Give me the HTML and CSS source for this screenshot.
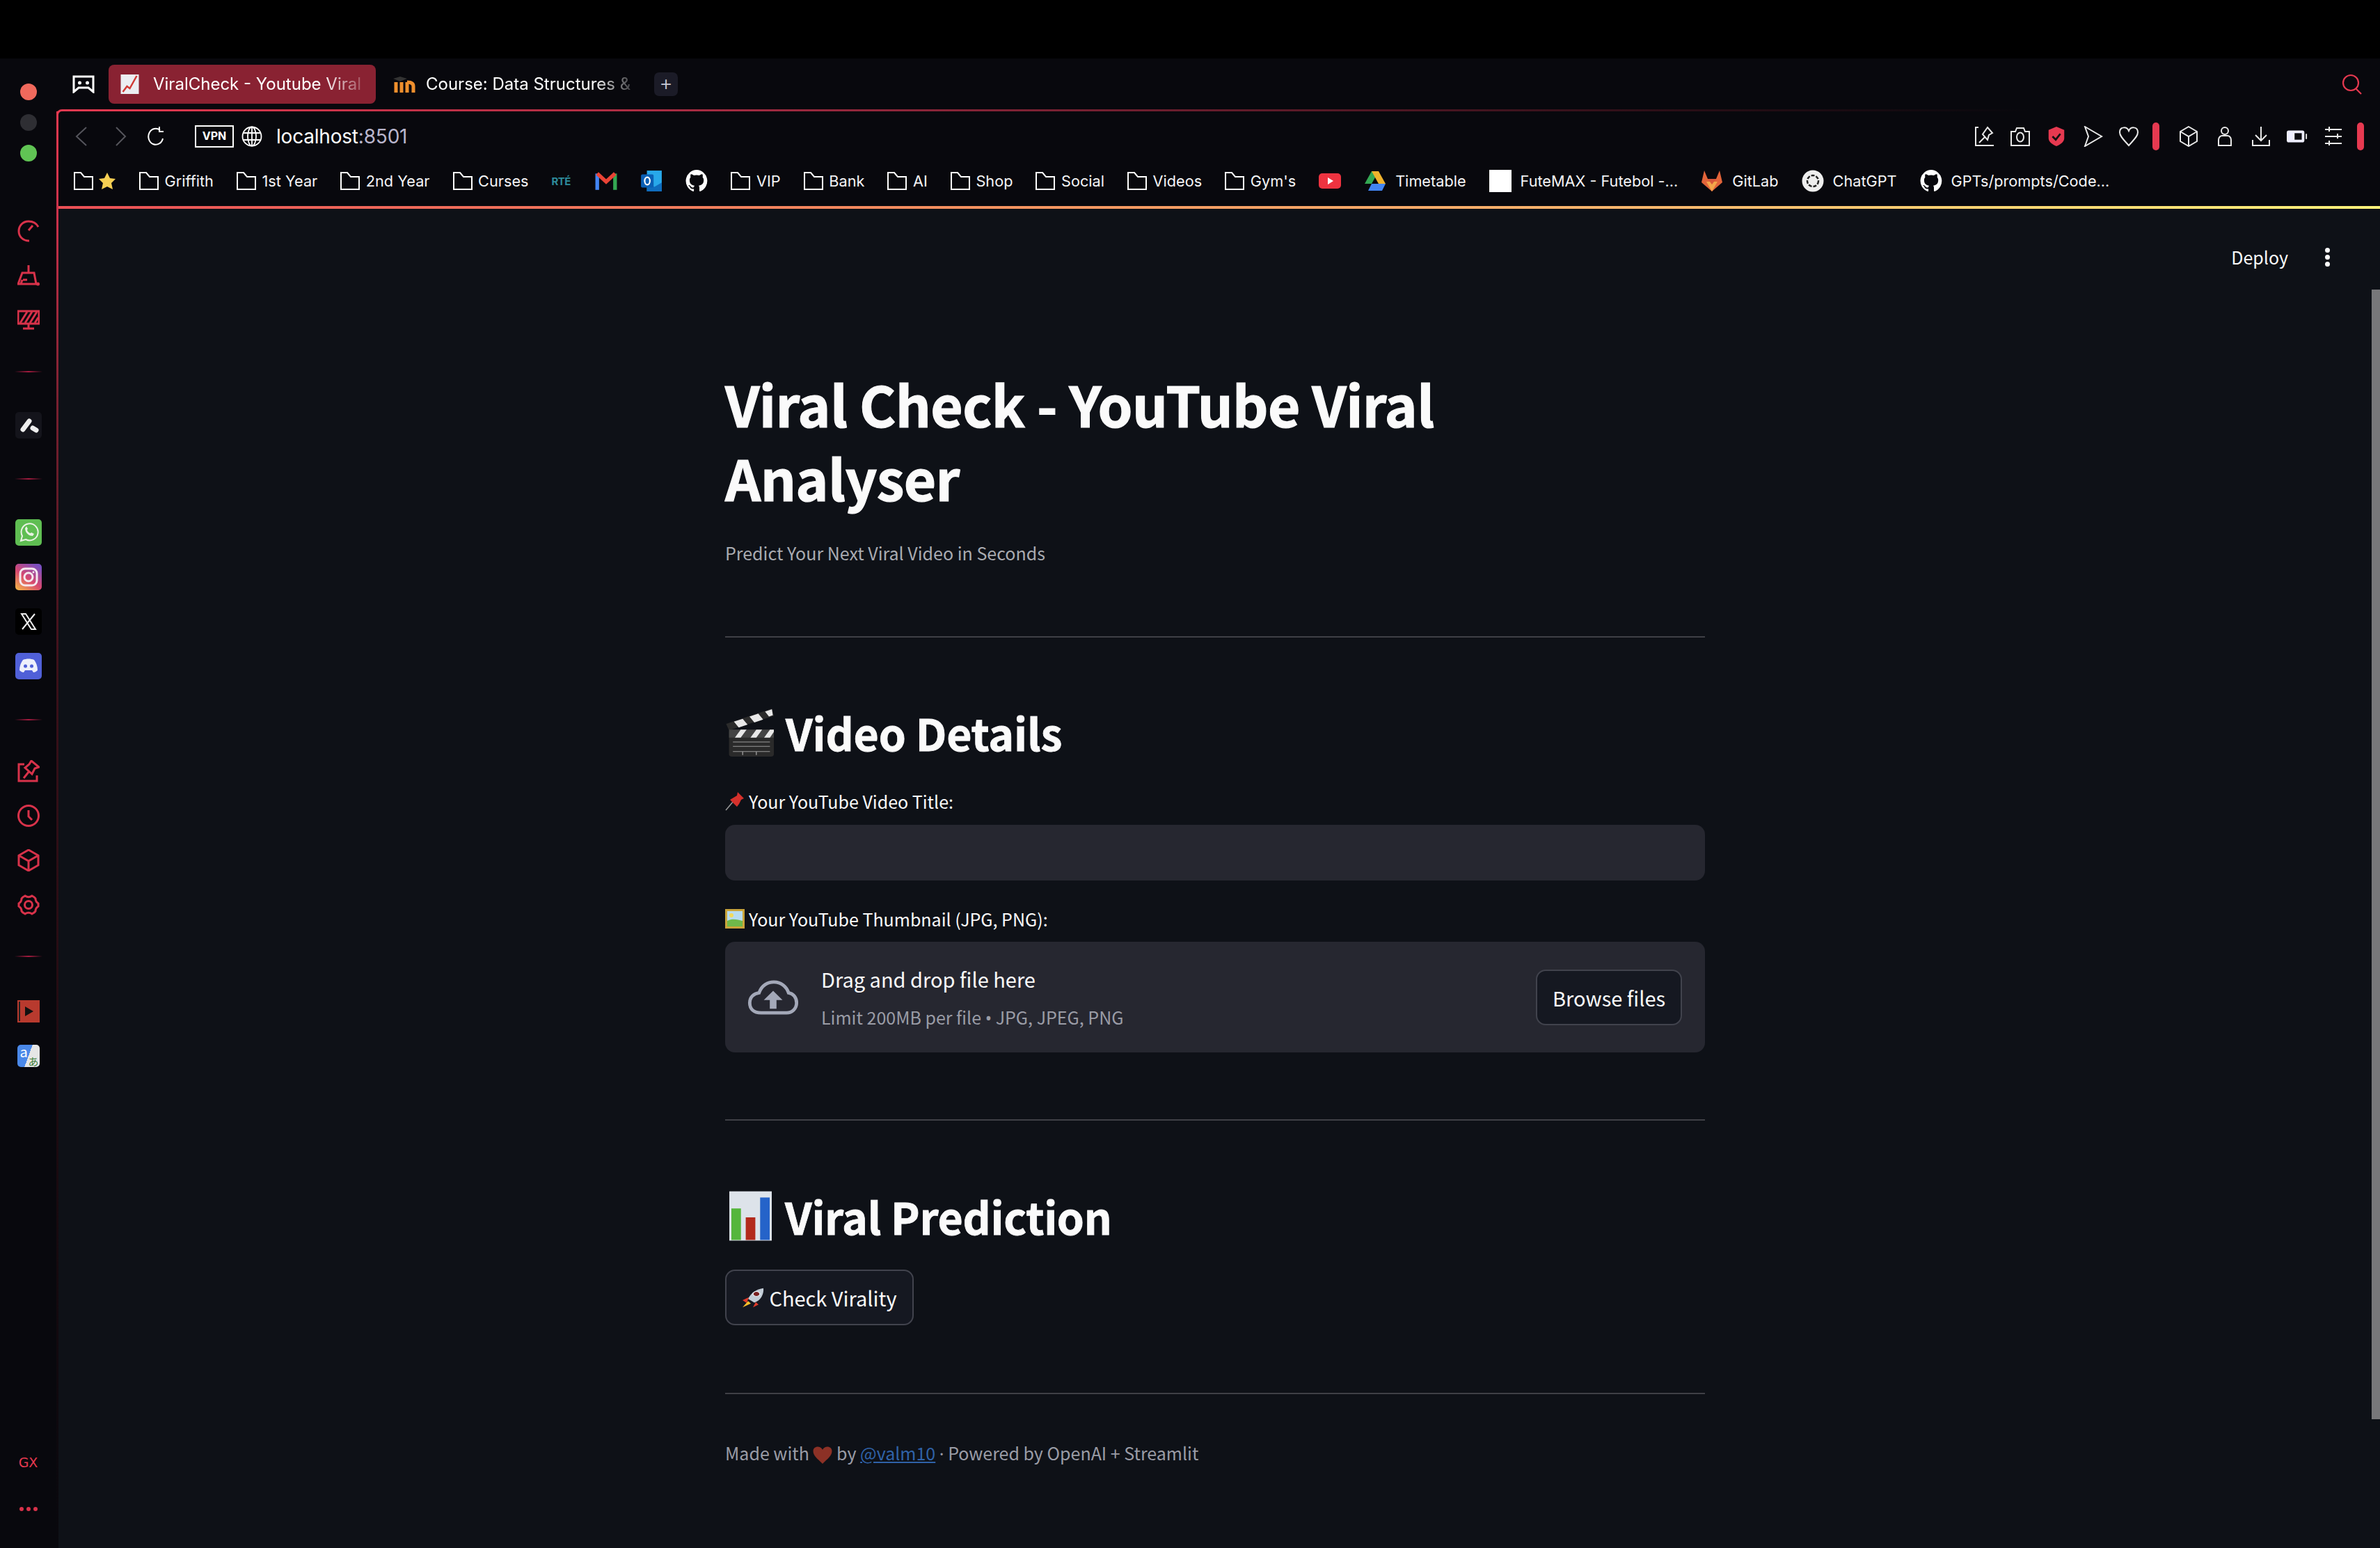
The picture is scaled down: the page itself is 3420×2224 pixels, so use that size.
FILE: index.html
```html
<!DOCTYPE html>
<html lang="en">
<head>
    <meta charset="UTF-8">
    <title>ViralCheck - Youtube Viral Analyser</title>
    <link rel="stylesheet" href="styles.css">
</head>
<body>
    <div class="top-strip"></div>
    <div class="browser">
        <aside class="sidebar">
            <div class="traffic">
                <span class="dot dot-red"></span>
                <span class="dot dot-grey"></span>
                <span class="dot dot-green"></span>
            </div>
            <div class="side-group side-group-first">
                <svg class="side-icon" viewBox="0 0 32 32"><path d="M30 10C27 4 22 2 16 2 8 2 2 8 2 16s6 14 15 14" /><path d="M16 15l6-7" /></svg>
                <svg class="side-icon" viewBox="0 0 32 32"><path d="M16 1v11M7 12h17l3 16H1zM8 22h6M7 22l-2 6" /><circle cx="29.500" cy="28" r="2.500" fill="#d8324a" stroke="none" /></svg>
                <svg class="side-icon" viewBox="0 0 32 32"><rect x="1" y="3" width="30" height="18" /><path d="M4 20L14 4M11 20L21 4M18 20L28 4M25 20l5-8M8 28h16M16 22v5" /></svg>
            </div>
            <div class="side-line"></div>
            <div class="side-app app-dark"><svg viewBox="0 0 38 38"><path d="M11 25l9-12" stroke="#eee" stroke-width="7" stroke-linecap="round" /><path d="M25 23l5 3" stroke="#eee" stroke-width="7" stroke-linecap="round" /></svg></div>
            <div class="side-line"></div>
            <div class="side-group tight">
                <div class="side-app app-green"><svg viewBox="0 0 38 38"><path d="M8 31l2-7a12 12 0 1 1 5 5z" fill="none" stroke="#e9f2e4" stroke-width="2" /><path d="M14 13c0 6 5 11 11 11l2-3-4-2-1 1c-2 0-5-3-5-5l1-1-2-4z" fill="#e9f2e4" /></svg></div>
                <div class="side-app app-insta"><svg viewBox="0 0 38 38"><rect x="7" y="7" width="24" height="24" rx="7" fill="none" stroke="#f4e8ee" stroke-width="3" /><circle cx="19" cy="19" r="6" fill="none" stroke="#f4e8ee" stroke-width="3" /><circle cx="26" cy="12" r="1.500" fill="#f4e8ee" /></svg></div>
                <div class="side-app app-black"><svg viewBox="0 0 38 38"><path d="M9 8h6l14 22h-6zM28 8L10 30" fill="none" stroke="#eee" stroke-width="2" /></svg></div>
                <div class="side-app app-discord"><svg viewBox="0 0 38 38"><path d="M11 10c5-2 11-2 16 0 3 4 5 9 5 15-2 2-4 3-6 3l-2-3H14l-2 3c-2 0-4-1-6-3 0-6 2-11 5-15z" fill="#eef0fb" /><circle cx="14.500" cy="19" r="2.500" fill="#5060d8" /><circle cx="23.500" cy="19" r="2.500" fill="#5060d8" /></svg></div>
            </div>
            <div class="side-line"></div>
            <div class="side-group">
                <svg class="side-icon" viewBox="0 0 32 32"><path d="M10 6H2v24h26v-8" /><path d="M20 1l11 9-6 2-4 8-10-9 6-5zM9 26l8-10" /></svg>
                <svg class="side-icon" viewBox="0 0 32 32"><circle cx="16" cy="16" r="14.500" /><path d="M16 8v9l5 5" /></svg>
                <svg class="side-icon" viewBox="0 0 32 32"><path d="M16 1l14 8v14l-14 8-14-8V9zM2 9l14 8 14-8M16 17v14" /></svg>
                <svg class="side-icon" viewBox="0 0 32 32"><circle cx="16" cy="16" r="5.500" /><path d="M11 3c3 2 7 2 10 0 2 1 4 2 5 4 0 3 1 5 4 7v4c-3 2-4 4-4 7-1 2-3 3-5 4-3-2-7-2-10 0-2-1-4-2-5-4 0-3-1-5-4-7v-4c3-2 4-4 4-7 1-2 3-3 5-4z" /></svg>
            </div>
            <div class="side-line"></div>
            <div class="side-group side-group-last">
                <div class="side-app app-player"><svg viewBox="0 0 32 32"><rect width="32" height="32" fill="#b83a2e" /><rect x="2" y="2" width="2" height="28" fill="#222" /><path d="M11 9l12 7-12 7z" fill="#111" /></svg></div>
                <div class="side-app app-translate">
                    <span class="tr-a">a</span><span class="tr-b">あ</span>
                </div>
            </div>
            <div class="side-bottom">
                <span class="gx">GX</span>
                <span class="more-dots"><i></i><i></i><i></i></span>
            </div>
        </aside>

        <div class="window">
            <div class="tabs">
                <svg class="tabs-icon" viewBox="0 0 32 26"><path d="M2 2h28v22l-7-6H9l-7 6z" /><circle cx="10.500" cy="11" r="2.500" fill="#fff" stroke="none" /><circle cx="21.500" cy="11" r="2.500" fill="#fff" stroke="none" /></svg>
                <div class="tab tab-active">
                    <svg class="tab-fav" viewBox="0 0 26 28"><rect width="26" height="28" fill="#eceef2" /><path d="M3 25l6-8 4 3 10-18" fill="none" stroke="#d03a35" stroke-width="2.500" /></svg>
                    <span class="tab-title">ViralCheck - Youtube Viral</span>
                </div>
                <div class="tab tab-second">
                    <svg class="tab-fav-wide" viewBox="0 0 34 24"><path d="M1 4l10-3 10 3-10 4z" fill="#333" /><path d="M5 9v15M13 9v15M21 9c6 0 9 2 9 6v9M21 9v15" fill="none" stroke="#ef8f2d" stroke-width="5" /></svg>
                    <span class="tab-title tab-title-second">Course: Data Structures &amp;</span>
                </div>
                <div class="tab-add">+</div>
                <svg class="tabs-search" viewBox="0 0 30 30"><circle cx="13" cy="13" r="11" /><path d="M20 21l8 8" /></svg>
            </div>

            <div class="frame">
                <div class="address">
                    <svg class="nav-icon nav-back" viewBox="0 0 19 28"><path d="M17 1L3 14l14 13" /></svg>
                    <svg class="nav-icon nav-forward" viewBox="0 0 17 28"><path d="M2 1l13 13L2 27" /></svg>
                    <svg class="reload" viewBox="0 0 24 30"><path d="M18 6a10.500 11.500 0 1 0 4 12M17 1v7h6" /></svg>
                    <span class="vpn">VPN</span>
                    <svg class="globe" viewBox="0 0 30 30"><circle cx="15" cy="15" r="13.500" /><ellipse cx="15" cy="15" rx="6" ry="13.500" /><path d="M2 10h26M2 20h26M15 1v28" /></svg>
                    <span class="url">localhost<span class="url-port">:8501</span></span>
                    <div class="ext-icons">
                        <svg class="ext" viewBox="0 0 30 30"><path d="M7 2H3v26h26M20 2l7 8-5 3-2 7-7-8zM8 24l8-8" /></svg>
                        <svg class="ext" viewBox="0 0 30 30"><path d="M2 8h6l2-5h10l2 5h6v20H2z" /><ellipse cx="15" cy="16" rx="5" ry="6.500" /></svg>
                        <svg class="ext ext-shield" viewBox="0 0 30 32"><path d="M15 1l12 5v13c0 6-7 10-12 12C10 29 3 25 3 19V6z" fill="#e63950" stroke="none" /><path d="M9 16l5 5 7-9" fill="none" stroke="#111" stroke-width="3" /></svg>
                        <svg class="ext" viewBox="0 0 30 30"><path d="M4 1l24 14L4 29l5-14z" /></svg>
                        <svg class="ext" viewBox="0 0 30 30"><path d="M15 28C8 20 2 15 2 9c0-8 10-9 13-2 3-7 13-6 13 2 0 6-6 11-13 19z" /></svg>
                        <span class="ext-bar"></span>
                        <svg class="ext" viewBox="0 0 30 30"><path d="M15 1l12 7v14l-12 7-12-7V8zM3 8l12 7 12-7M15 15v14" /></svg>
                        <svg class="ext" viewBox="0 0 30 30"><circle cx="15" cy="7" r="5" /><path d="M6 28V20c0-4 3-6 5-6h8c2 0 5 2 5 6v8z" /></svg>
                        <svg class="ext" viewBox="0 0 30 30"><path d="M15 1v20M7 13l8 8 8-8M3 20v8h24v-8" /></svg>
                        <svg class="ext" viewBox="0 0 32 30"><rect x="0" y="6" width="27" height="18" rx="3" fill="#eef" stroke="none" /><rect x="12" y="10" width="11" height="10" fill="#0a0a0f" stroke="none" /><path d="M30 11v8" /></svg>
                        <svg class="ext" viewBox="0 0 30 30"><path d="M3 5h24M3 15h24M3 25h24M9 1v7M21 11v7M9 21v7" /></svg>
                        <span class="ext-bar"></span>
                    </div>
                </div>

                <div class="bookmarks">
                    <div class="bm bm-first"><svg class="folder" viewBox="0 0 28 26"><path d="M1 1h9l5 6h12v18H1z" /></svg><svg class="bm-star" viewBox="0 0 26 26"><path d="M13 1l4 8 8 1-6 6 2 9-8-4-8 4 2-9-6-6 8-1z" fill="#f6cf53" /></svg></div>
                    <div class="bm"><svg class="folder" viewBox="0 0 28 26"><path d="M1 1h9l5 6h12v18H1z" /></svg>Griffith</div>
                    <div class="bm"><svg class="folder" viewBox="0 0 28 26"><path d="M1 1h9l5 6h12v18H1z" /></svg>1st Year</div>
                    <div class="bm"><svg class="folder" viewBox="0 0 28 26"><path d="M1 1h9l5 6h12v18H1z" /></svg>2nd Year</div>
                    <div class="bm"><svg class="folder" viewBox="0 0 28 26"><path d="M1 1h9l5 6h12v18H1z" /></svg>Curses</div>
                    <div class="bm bm-rte">RTÉ</div>
                    <div class="bm"><svg class="bm-fav" viewBox="0 0 30 26"><path d="M3 25V3" stroke="#4285f4" stroke-width="5" /><path d="M27 25V3" stroke="#34a853" stroke-width="5" /><path d="M3 3l12 11L27 3" fill="none" stroke="#ea4335" stroke-width="5" /></svg></div>
                    <div class="bm"><svg class="bm-fav" viewBox="0 0 30 30"><rect x="9" y="1" width="20" height="28" fill="#28a8ea" /><path d="M9 17l10 6 10-6v12H9z" fill="#0f6cbd" /><rect x="1" y="6" width="17" height="18" rx="2" fill="#0a5fb4" /><ellipse cx="9.500" cy="15" rx="3.500" ry="5" fill="none" stroke="#fff" stroke-width="2" /></svg></div>
                    <div class="bm"><svg class="bm-fav" viewBox="0 0 32 32"><use href="#gh" /></svg></div>
                    <div class="bm"><svg class="folder" viewBox="0 0 28 26"><path d="M1 1h9l5 6h12v18H1z" /></svg>VIP</div>
                    <div class="bm"><svg class="folder" viewBox="0 0 28 26"><path d="M1 1h9l5 6h12v18H1z" /></svg>Bank</div>
                    <div class="bm"><svg class="folder" viewBox="0 0 28 26"><path d="M1 1h9l5 6h12v18H1z" /></svg>AI</div>
                    <div class="bm"><svg class="folder" viewBox="0 0 28 26"><path d="M1 1h9l5 6h12v18H1z" /></svg>Shop</div>
                    <div class="bm"><svg class="folder" viewBox="0 0 28 26"><path d="M1 1h9l5 6h12v18H1z" /></svg>Social</div>
                    <div class="bm"><svg class="folder" viewBox="0 0 28 26"><path d="M1 1h9l5 6h12v18H1z" /></svg>Videos</div>
                    <div class="bm"><svg class="folder" viewBox="0 0 28 26"><path d="M1 1h9l5 6h12v18H1z" /></svg>Gym's</div>
                    <div class="bm"><svg class="bm-fav" viewBox="0 0 32 32"><rect y="5" width="32" height="22" rx="5" fill="#ee3340" /><path d="M13 11l8 5-8 5z" fill="#fff" /></svg></div>
                    <div class="bm bm-labeled"><svg class="bm-fav" viewBox="0 0 32 32"><path d="M11 2h10L11 20H1z" fill="#34a853" /><path d="M21 2l10 18H21L11 2z" fill="#f0b32d" /><path d="M6 30L11 20h20l-5 10z" fill="#4285f4" /></svg>Timetable</div>
                    <div class="bm bm-labeled"><span class="white-box"></span>FuteMAX - Futebol -...</div>
                    <div class="bm bm-labeled"><svg class="bm-fav" viewBox="0 0 32 32"><path d="M16 31L1 18 5 1l5 12h12l5-12 4 17z" fill="#e2643a" /><path d="M16 31L8 17h16z" fill="#f4a64a" /><path d="M10 13h12l-6 8z" fill="#d8553a" /></svg>GitLab</div>
                    <div class="bm bm-labeled"><svg class="bm-fav" viewBox="0 0 32 32"><circle cx="16" cy="16" r="15.500" fill="#eee" /><circle cx="16" cy="16" r="8" fill="none" stroke="#222" stroke-width="2.500" stroke-dasharray="5 2" /></svg>ChatGPT</div>
                    <div class="bm bm-labeled"><svg class="bm-fav" viewBox="0 0 32 32"><use href="#gh" /></svg>GPTs/prompts/Code...</div>
                </div>

                <main class="page">
                    <div class="st-header">
                        <span class="deploy">Deploy</span>
                        <span class="kebab"><i></i><i></i><i></i></span>
                    </div>
                    <div class="scrollbar"></div>
                    <div class="block">
                        <h1>Viral Check - YouTube Viral<br>Analyser</h1>
                        <p class="tagline">Predict Your Next Viral Video in Seconds</p>
                        <hr class="rule rule-first">

                        <h2 class="section-title">
                            <svg class="emoji-clap" viewBox="0 0 50 68" preserveAspectRatio="none"><path d="M1 22L48 1l2 10L4 31z" fill="#2b2b2b" /><path d="M9 19l9-4 5 8-9 4zM25 12l9-4 5 8-9 4zM41 5l7-3 1 8-4 2z" fill="#e8e8e8" /><rect x="4" y="30" width="46" height="37" rx="3" fill="#2a2a2a" /><path d="M4 30h46v11H4z" fill="#444" /><path d="M10 41l6-11h6l-6 11zM26 41l6-11h6l-6 11zM40 41l6-11h4v3l-4 8z" fill="#e8e8e8" /><path d="M8 47h38M8 53h38M8 60h38M18 60v5M32 60v5" stroke="#999" stroke-width="1" /></svg>
                            <span>Video Details</span>
                        </h2>

                        <label class="field-label">
                            <svg class="emoji-sm" viewBox="0 0 28 28"><path d="M1 27l11-13" stroke="#999" stroke-width="1.500" /><path d="M18 1l9 9-4 2-3 6-3 4-10-10 5-3 5-3z" fill="#d5312c" /></svg>
                            <span>Your YouTube Video Title:</span>
                        </label>
                        <div class="text-input"></div>

                        <label class="field-label field-label-next">
                            <svg class="emoji-sm" viewBox="0 0 28 28"><rect width="28" height="28" fill="#c9a43a" /><rect x="3" y="3" width="22" height="22" fill="#b8dcf0" /><path d="M3 17c7-4 15-2 22 0v8H3z" fill="#6fb84a" /><circle cx="9" cy="9" r="3" fill="#f3da5a" /></svg>
                            <span>Your YouTube Thumbnail (JPG, PNG):</span>
                        </label>
                        <div class="uploader">
                            <svg class="cloud" viewBox="0 0 76 52"><path d="M20 49C9 49 3 43 3 34c0-8 6-14 14-15C21 8 30 3 39 3c11 0 19 7 22 16 7 1 12 7 12 15 0 9-7 15-15 15z" fill="none" stroke="#a3a8b8" stroke-width="5" /><path d="M38 16L24 30h9v13h10V30h9z" fill="#a3a8b8" /></svg>
                            <div class="uploader-text">
                                <div class="uploader-main">Drag and drop file here</div>
                                <div class="uploader-sub">Limit 200MB per file <span class="sym">•</span> JPG, JPEG, PNG</div>
                            </div>
                            <button class="st-btn browse">Browse files</button>
                        </div>
                        <hr class="rule rule-upload">

                        <h2 class="section-title section-title-chart">
                            <svg class="emoji-chart" viewBox="0 0 62 72"><rect width="62" height="72" fill="#dde3ea" /><rect x="3" y="25" width="14" height="46" fill="#55b63c" /><rect x="24" y="38" width="14" height="33" fill="#b32a1c" /><rect x="45" y="9" width="14" height="62" fill="#2563c9" /></svg>
                            <span>Viral Prediction</span>
                        </h2>
                        <button class="st-btn check">
                            <svg class="emoji-rocket" viewBox="0 0 32 42" preserveAspectRatio="none"><path d="M31 1C21 3 13 11 9 23l9 8C27 27 32 13 31 1z" fill="#c2ccd6" /><circle cx="21" cy="13" r="5" fill="#7a2020" stroke="#e8eef4" stroke-width="1.500" /><path d="M10 20L1 26l6 6zM20 30l-4 11 8-6z" fill="#e03a2a" /><path d="M9 28L1 41l12-8z" fill="#f8c02c" /></svg>
                            <span>Check Virality</span>
                        </button>
                        <hr class="rule rule-check">

                        <p class="footer">Made with <svg class="emoji-heart" viewBox="0 0 28 26"><path d="M14 26C6 18 0 14 0 7 0 0 10-2 14 5c4-7 14-5 14 2 0 7-6 11-14 19z" fill="#8c3126" /></svg> by <a href="#">@valm10</a> <span class="sym">·</span> Powered by OpenAI + Streamlit</p>
                    </div>
                </main>
            </div>
        </div>
    </div>

    <svg class="defs" width="0" height="0">
        <symbol id="gh" viewBox="0 0 32 32"><path fill="#fff" d="M16 0a16 16 0 0 0-5 31c.8.100 1.100-.300 1.100-.800v-3c-4.400 1-5.400-2-5.400-2-.700-1.800-1.800-2.300-1.800-2.300-1.400-1 .100-1 .100-1 1.600.100 2.500 1.700 2.500 1.700 1.400 2.500 3.700 1.800 4.600 1.300.100-1 .600-1.800 1-2.200-3.500-.400-7.200-1.800-7.200-7.900 0-1.700.600-3.100 1.600-4.200-.200-.400-.700-2 .100-4.200 0 0 1.300-.400 4.400 1.600a15 15 0 0 1 8 0c3.100-2 4.400-1.600 4.400-1.600.900 2.200.300 3.800.200 4.200 1 1.100 1.600 2.500 1.600 4.200 0 6.100-3.700 7.500-7.300 7.900.600.500 1.100 1.500 1.100 3v4.400c0 .500.300.900 1.100.800A16 16 0 0 0 16 0z" /></symbol>
    </svg>
</body>
</html>
```

FILE: styles.css
```css
* {
    box-sizing: border-box;
}

html, body {
    margin: 0;
    height: 2224px;
    overflow: hidden;
    background: #000;
}

body {
    font-family: Inter, "Liberation Sans", sans-serif;
    color: #fff;
}

.top-strip {
    height: 84px;
    background: #000;
}

.browser {
    display: flex;
    height: 2140px;
    background: #08080d;
}

.defs {
    position: absolute;
}

/* left rail */
.sidebar {
    width: 81px;
    flex: none;
    display: flex;
    flex-direction: column;
    align-items: center;
}

.traffic {
    display: flex;
    flex-direction: column;
    gap: 20px;
    margin-top: 36px;
}

.dot {
    display: block;
    width: 24px;
    height: 24px;
    border-radius: 50%;
}

.dot-red { background: #f0695c; }
.dot-grey { background: #2e2e33; }
.dot-green { background: #60c454; }

.side-group {
    display: flex;
    flex-direction: column;
    align-items: center;
    gap: 32px;
    margin-top: 57px;
}

.side-group-first {
    margin-top: 84px;
}

.side-group-last {
    margin-top: 62px;
}

.side-group.tight {
    gap: 26px;
}

.side-icon {
    display: block;
    width: 32px;
    height: 32px;
    fill: none;
    stroke: #d8324a;
    stroke-width: 3;
}

.side-line {
    width: 40px;
    height: 2px;
    margin-top: 57px;
    background: linear-gradient(90deg, transparent, #a51b3f 50%, transparent);
}

.side-app {
    width: 38px;
    height: 38px;
    border-radius: 5px;
    overflow: hidden;
}

.side-app svg {
    display: block;
    width: 100%;
    height: 100%;
}

.app-dark {
    margin-top: 57px;
    background: #14141b;
}

.app-green { background: #5fbe52; }
.app-insta { background: linear-gradient(35deg, #f2b04a 5%, #d8486f 45%, #7a4fc0 90%); }
.app-black { background: #000; }
.app-discord { background: #5060d8; }

.app-player {
    width: 32px;
    height: 32px;
    border-radius: 0;
}

.app-translate {
    position: relative;
    width: 32px;
    height: 32px;
    background: linear-gradient(110deg, #4a88e8 50%, #e6e6e6 50%);
    font-family: "Noto Sans CJK JP", sans-serif;
    line-height: 1;
    overflow: visible;
}

.tr-a {
    position: absolute;
    left: 4px;
    top: 0;
    font-size: 20px;
    color: #fff;
}

.tr-b {
    position: absolute;
    right: 1px;
    bottom: 1px;
    font-size: 15px;
    color: #3f7f3a;
}

.side-bottom {
    margin-top: auto;
    margin-bottom: 53px;
    display: flex;
    flex-direction: column;
    align-items: center;
    gap: 57px;
}

.gx {
    font-family: "DejaVu Sans", sans-serif;
    font-size: 19px;
    line-height: 14px;
    color: #e63950;
}

.more-dots {
    display: flex;
    gap: 4px;
}

.more-dots i {
    width: 6px;
    height: 6px;
    border-radius: 50%;
    background: #d8324a;
}

/* tabs + address area */
.window {
    flex: 1;
    min-width: 0;
    display: flex;
    flex-direction: column;
}

.tabs {
    height: 73px;
    flex: none;
    display: flex;
    align-items: center;
    padding: 0 25px 0 23px;
}

.tabs-icon {
    width: 32px;
    height: 26px;
    fill: none;
    stroke: #fff;
    stroke-width: 3;
    margin-right: 20px;
}

.tab {
    height: 56px;
    display: flex;
    align-items: center;
    white-space: nowrap;
    border-radius: 8px;
}

.tab-active {
    width: 384px;
    padding-left: 17px;
    gap: 20px;
    background: #892232;
    margin-right: 24px;
}

.tab-second {
    width: 342px;
    gap: 14px;
}

.tab-fav {
    width: 27px;
    height: 28px;
    flex: none;
}

.tab-fav-wide {
    width: 34px;
    height: 24px;
    flex: none;
}

.tab-title {
    font-size: 24px;
    width: 298px;
    overflow: hidden;
    -webkit-mask-image: linear-gradient(90deg, #000 82%, rgba(0, 0, 0, 0.25) 100%);
    mask-image: linear-gradient(90deg, #000 82%, rgba(0, 0, 0, 0.25) 100%);
}

.tab-title-second {
    width: 294px;
}

.tab-add {
    width: 34px;
    height: 34px;
    margin-left: 34px;
    border-radius: 7px;
    background: #1b1b27;
    text-align: center;
    line-height: 31px;
    font-size: 30px;
    color: #c9c9d6;
    font-weight: 300;
}

.tabs-search {
    width: 30px;
    height: 30px;
    fill: none;
    stroke: #e63950;
    stroke-width: 2.200;
    margin-left: auto;
}

.frame {
    flex: 1;
    min-height: 0;
    display: flex;
    flex-direction: column;
    position: relative;
    border-left: 3px solid transparent;
    border-top: 3px solid transparent;
    border-radius: 8px 0 0 0;
    background:
        linear-gradient(#08080d, #08080d) padding-box,
        linear-gradient(90deg, #e63950 0%, #a02a40 30%, #2a0e16 70%, #08080d 85%) border-box;
}

.frame::before {
    content: "";
    position: absolute;
    left: -3px;
    top: 0;
    bottom: 0;
    width: 3px;
    background: linear-gradient(180deg, #e63950 0%, #c8304a 8%, #7a2030 20%, #3a1019 40%, #1c0a10 70%, #08080d 100%);
}

.address {
    height: 72px;
    flex: none;
    display: flex;
    align-items: center;
    padding-left: 23px;
}

.nav-icon {
    height: 28px;
    fill: none;
    stroke: #55555c;
    stroke-width: 2;
}

.nav-back {
    width: 19px;
    margin-right: 39px;
}

.nav-forward {
    width: 17px;
    margin-right: 30px;
}

.reload {
    width: 24px;
    height: 30px;
    fill: none;
    stroke: #fff;
    stroke-width: 2;
    margin-right: 44px;
}

.vpn {
    width: 56px;
    height: 32px;
    border: 2px solid #fff;
    font-size: 16px;
    font-weight: 700;
    line-height: 27px;
    text-align: center;
}

.globe {
    width: 30px;
    height: 30px;
    fill: none;
    stroke: #fff;
    stroke-width: 1.800;
    margin-left: 11px;
    margin-right: 20px;
}

.url {
    font-size: 28px;
    letter-spacing: -0.200px;
}

.url-port {
    color: #b9b5cc;
}

.ext-icons {
    margin-left: auto;
    display: flex;
    align-items: center;
    gap: 22px;
    padding-right: 18px;
}

.ext {
    width: 30px;
    height: 30px;
    fill: none;
    stroke: #e8e8e8;
    stroke-width: 2;
}

.ext-bar {
    width: 10px;
    height: 40px;
    border-radius: 5px;
    background: #e63950;
    margin-left: -3px;
    margin-right: 5px;
}

.bookmarks {
    height: 64px;
    flex: none;
    display: flex;
    align-items: center;
    padding: 0 0 8px 22px;
    gap: 33px;
    font-size: 21.700px;
    white-space: nowrap;
}

.bm {
    display: flex;
    align-items: center;
    gap: 8.600px;
    color: #f4f4f6;
}

.bm-first {
    gap: 7px;
}

.bm-labeled {
    gap: 13px;
}

.folder {
    width: 28px;
    height: 26px;
    fill: none;
    stroke: #fff;
    stroke-width: 2;
}

.bm-star {
    width: 26px;
    height: 26px;
}

.bm-rte {
    width: 30px;
    font-size: 15px;
    font-weight: 700;
    letter-spacing: -0.500px;
    color: #2e8b9b;
}

.bm-fav {
    width: 32px;
    height: 32px;
    flex: none;
}

.white-box {
    width: 32px;
    height: 32px;
    background: #fff;
}

/* streamlit page */
.page {
    flex: 1;
    min-height: 0;
    position: relative;
    border-top: 4px solid transparent;
    background:
        linear-gradient(#0e1117, #0e1117) padding-box,
        linear-gradient(90deg, #ea4f55 0%, #f6925f 40%, #fcb96e 70%, #ffd873 85%, #fff27a 100%) border-box;
    font-family: "Noto Sans CJK SC", "Noto Sans", sans-serif;
}

.st-header {
    position: absolute;
    top: 49px;
    right: 72px;
    display: flex;
    align-items: center;
    gap: 53px;
}

.deploy {
    font-size: 25px;
    line-height: 40px;
    color: #fafafa;
}

.kebab {
    display: flex;
    flex-direction: column;
    gap: 3px;
}

.kebab i {
    width: 7px;
    height: 7px;
    border-radius: 50%;
    background: #fafafa;
}

.scrollbar {
    position: absolute;
    top: 116px;
    right: 0;
    width: 12px;
    height: 1623px;
    background: #77777a;
}

.block {
    width: 1408px;
    margin-left: 958px;
}

h1 {
    margin: 0;
    padding-top: 226px;
    font-size: 80px;
    line-height: 106px;
    font-weight: 700;
    letter-spacing: -0.650px;
    -webkit-text-stroke: 1.200px #fafafa;
    color: #fafafa;
}

.tagline {
    margin: 38px 0 0;
    font-size: 25px;
    line-height: 36px;
    color: #a9abb1;
}

.rule {
    border: 0;
    height: 2px;
    margin: 0;
    background: #3f4046;
}

.rule-first {
    margin-top: 102px;
}

.section-title {
    display: flex;
    align-items: center;
    gap: 17px;
    margin: 93px 0 0;
    height: 86px;
    font-size: 62.500px;
    font-weight: 700;
    line-height: 86px;
    letter-spacing: -0.150px;
    -webkit-text-stroke: 0.800px #fafafa;
    color: #fafafa;
}

.section-title-chart {
    margin-top: 94px;
    gap: 19px;
}

.section-title-chart span {
    letter-spacing: -0.300px;
}

.emoji-clap {
    width: 70px;
    height: 71px;
    flex: none;
}

.field-label {
    display: flex;
    align-items: center;
    gap: 6px;
    font-size: 25px;
    line-height: 36px;
    height: 36px;
    color: #fafafa;
    margin-top: 38px;
}

.field-label-next {
    margin-top: 37px;
}

.emoji-sm {
    width: 28px;
    height: 28px;
    flex: none;
}

.text-input {
    height: 80px;
    margin-top: 16px;
    background: #262730;
    border-radius: 14px;
}

.uploader {
    display: flex;
    align-items: center;
    height: 159px;
    margin-top: 15px;
    padding: 0 33px 0 32px;
    background: #262730;
    border-radius: 14px;
}

.cloud {
    width: 74px;
    height: 50px;
    flex: none;
    margin-right: 32px;
}

.uploader-text {
    flex: 1;
}

.uploader-main {
    font-size: 29px;
    line-height: 42px;
    color: #fafafa;
}

.uploader-sub {
    margin-top: 16px;
    font-size: 25px;
    line-height: 36px;
    color: #9a9ca6;
}

.sym {
    font-family: "Noto Sans", sans-serif;
}

.st-btn {
    display: flex;
    align-items: center;
    justify-content: center;
    height: 80px;
    background: #151821;
    border: 2px solid #41434d;
    border-radius: 14px;
    color: #fafafa;
    font-family: inherit;
    font-size: 29px;
}

.browse {
    width: 210px;
}

.rule-upload {
    margin-top: 96px;
}

.emoji-chart {
    width: 61px;
    height: 72px;
    flex: none;
    margin-left: 6px;
}

.check {
    width: 271px;
    gap: 7px;
    margin-top: 34px;
}

.emoji-rocket {
    width: 32px;
    height: 29px;
}

.rule-check {
    margin-top: 97px;
}

.footer {
    margin: 66px 0 0;
    font-size: 25px;
    line-height: 36px;
    color: #9a9ca6;
}

.emoji-heart {
    width: 28px;
    height: 25px;
    vertical-align: -5px;
}

.footer a {
    color: #2f62a8;
}
```
